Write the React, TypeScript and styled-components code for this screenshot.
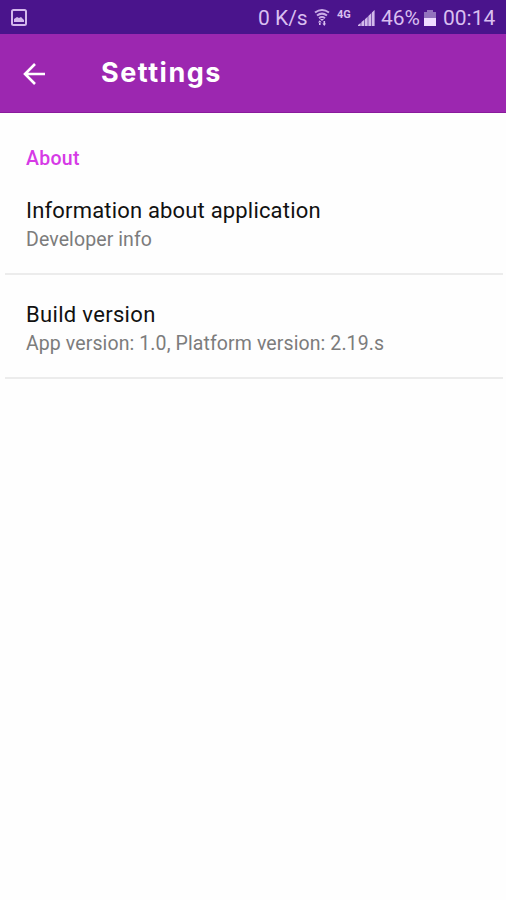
import React from "react";
import styled, { createGlobalStyle } from "styled-components";

const GlobalStyle = createGlobalStyle`
  * { box-sizing: border-box; }
  body { margin: 0; background: #fefefe; font-family: Roboto, sans-serif; }
`;

const Screen = styled.main`
  display: flex;
  flex-direction: column;
  height: 900px;
  overflow: hidden;
  background: #fefefe;
`;

const StatusBar = styled.header`
  display: flex;
  align-items: center;
  height: 34px;
  padding: 1px 10px 0 10px;
  background: #4a148c;
  color: #d9bff0;
`;

const StatusText = styled.span<{ $width: number }>`
  width: ${(p) => p.$width}px;
  font-size: 21px;
  line-height: 34px;
  white-space: nowrap;
`;

const Network = styled.span`
  width: 21px;
  height: 22px;
  font-size: 11px;
  font-weight: 700;
  line-height: 15px;
`;

const Spacer = styled.div`
  flex: 1;
`;

const Icon = styled.svg<{ $gap?: number }>`
  display: block;
  flex: none;
  margin-right: ${(p) => p.$gap ?? 0}px;
`;

const AppBar = styled.div`
  display: flex;
  align-items: center;
  height: 79px;
  padding: 0 22px;
  background: #9c27b0;
  border-bottom: 1px solid #8a1a9c;
  color: #fff;
`;

const BackButton = styled.button`
  display: flex;
  width: 79px;
  padding: 1px 0 0;
  border: 0;
  background: none;
  color: inherit;
`;

const Title = styled.h1`
  margin: 0;
  font-family: Inter, Roboto, sans-serif;
  font-size: 27px;
  font-weight: 700;
  line-height: 36px;
  letter-spacing: 1.5px;
`;

const SectionTitle = styled.h2`
  margin: 0;
  padding: 33px 26px 0;
  height: 70px;
  font-size: 19.5px;
  font-weight: 500;
  line-height: 26px;
  letter-spacing: 0.3px;
  color: #d63ae6;
`;

const RowTitle = styled.div<{ $spacing: number }>`
  font-size: 22px;
  line-height: 28px;
  letter-spacing: ${(p) => p.$spacing}px;
  color: #111;
`;

const RowDetail = styled.div`
  font-size: 19.5px;
  line-height: 29px;
  letter-spacing: 0.1px;
  color: #7c7c7c;
`;

const Row = styled.div<{ $height: number }>`
  height: ${(p) => p.$height}px;
  margin: 0 3px 0 5px;
  padding: 14px 21px 0;
  border-bottom: 2px solid #ececec;
`;

const Rows = styled.section`
  & > ${Row} + ${Row} { padding-top: 26px; }
`;

const PictureIcon = () => (
  <Icon width="18" height="18" viewBox="0 0 18 18">
    <rect x="2" y="1" width="14" height="15" rx="1.5" fill="none" stroke="#d4b8ec" strokeWidth="2" />
    <path d="M4 13V10l3-2 2 1 2-1 3 3v2z" fill="#d4b8ec" />
  </Icon>
);

const WifiIcon = () => (
  <Icon width="16" height="20" viewBox="0 0 16 20" $gap={7}>
    <g fill="none" stroke="#c9ace6" strokeWidth="2">
      <path d="M1 4.500Q8-.5 15 4.500" />
      <path d="M3 7.500Q8 3.700 13 7.500" />
      <path d="M5 10.200Q8 8 11 10.200" />
    </g>
    <path d="M6 11h4l-2 2zM4 14.500h3.600L5.800 12.200zM5 14h1.600v3H5zM9.500 13h1.600v3H9.500zM8.400 15.500H12L10.300 18z" fill="#d9bff0" />
  </Icon>
);

const SignalIcon = () => (
  <Icon width="17" height="18" viewBox="0 0 17 18" $gap={6}>
    <path d="M0 17h2.500v-3L0 16zM3.500 17h2.500v-6l-2.500 2zM7 17h2.500V8L7 10.200zM10.500 17H13V4.500L10.500 7zM14 17h2.500V1L14 3.500z" fill="#d3b9ec" />
    <path d="M0 17L16.500 1V17z" fill="#d3b9ec" opacity=".4" />
  </Icon>
);

const BatteryIcon = () => (
  <Icon width="12" height="18" viewBox="0 0 12 18" $gap={7}>
    <path d="M3 1h6v2h3v6H0V3h3z" fill="#9273bd" />
    <path d="M0 9h12v8H0z" fill="#eedcff" />
  </Icon>
);

const settings = [
  { title: "Information about application", detail: "Developer info", height: 92, spacing: 0.18 },
  { title: "Build version", detail: "App version: 1.0, Platform version: 2.19.s", height: 104, spacing: 0.32 },
];

export default function App() {
  return (
    <Screen>
      <GlobalStyle />
      <StatusBar>
        <PictureIcon />
        <Spacer />
        <StatusText $width={56}>0 K/s</StatusText>
        <WifiIcon />
        <Network>4G</Network>
        <SignalIcon />
        <StatusText $width={43}>46%</StatusText>
        <BatteryIcon />
        <StatusText $width={53}>00:14</StatusText>
      </StatusBar>
      <AppBar>
        <BackButton aria-label="Back">
          <Icon width="26" height="26" viewBox="0 0 26 26">
            <path d="M23 13H3M13 3L3 13l10 10" fill="none" stroke="currentColor" strokeWidth="2.6" />
          </Icon>
        </BackButton>
        <Title>Settings</Title>
      </AppBar>
      <SectionTitle>About</SectionTitle>
      <Rows>
        {settings.map((s) => (
          <Row key={s.title} $height={s.height}>
            <RowTitle $spacing={s.spacing}>{s.title}</RowTitle>
            <RowDetail>{s.detail}</RowDetail>
          </Row>
        ))}
      </Rows>
    </Screen>
  );
}
